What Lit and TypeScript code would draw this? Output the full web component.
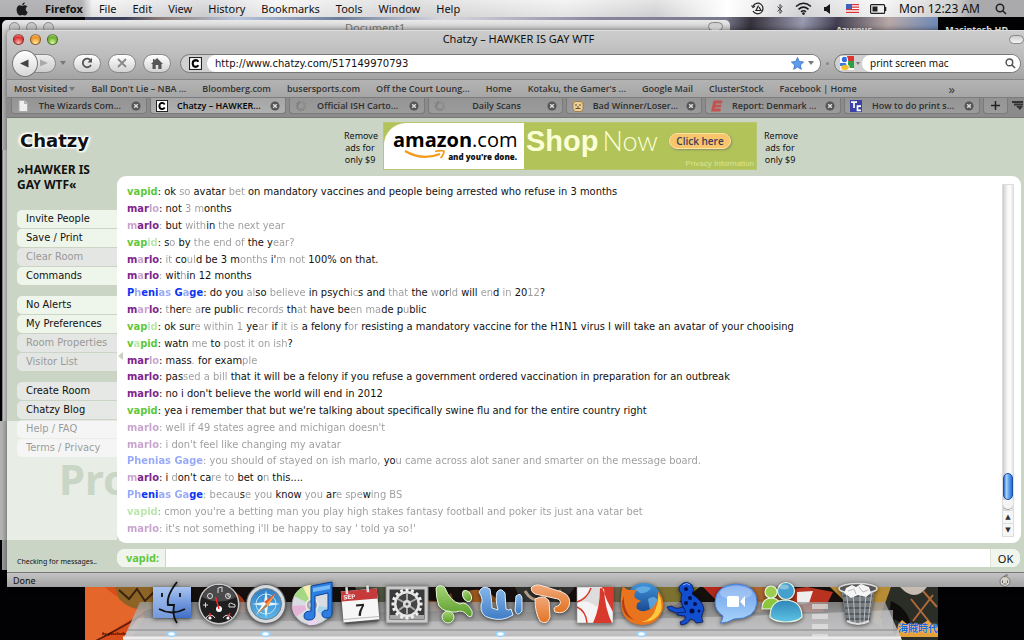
import { LitElement, html, css, svg } from "lit";
import { customElement } from "lit/decorators.js";
import { classMap } from "lit/directives/class-map.js";

type Message = { who: string; kind: "vapid" | "marlo" | "gage"; text: string };

// Stretches between tildes are drawn faded.
const messages: Message[] = [
  { who: "vapid", kind: "vapid", text: "ok ~so~ avatar ~bet~ on mandatory vaccines and people being arrested who refuse in 3 months" },
  { who: "mar~lo~", kind: "marlo", text: "not ~3~ ~m~onths" },
  { who: "~m~arlo~:~", kind: "marlo", text: "but ~with~in ~the next year~" },
  { who: "vap~id~", kind: "vapid", text: "s~o~ by ~the end of~ the y~ear?~" },
  { who: "m~a~rlo", kind: "marlo", text: "~it~ co~ul~d be 3 m~onths~ i'~m not~ 100% on that." },
  { who: "m~a~rlo~:~", kind: "marlo", text: "wit~h~in 12 months" },
  { who: "P~h~eni~as~ G~a~ge", kind: "gage", text: "do you ~al~so ~believe~ in psych~ic~s and ~that~ the ~w~or~ld~ will ~en~d ~in~ 20~12~?" },
  { who: "m~ar~lo", kind: "marlo", text: "~t~her~e a~re publi~c~ r~ecords~ th~at~ have be~en ma~de p~u~blic" },
  { who: "vap~id~", kind: "vapid", text: "ok sur~e within 1~ ye~ar~ if ~it is~ a felony f~or~ resisting a mandatory vaccine for the H1N1 virus I will take an avatar of your chooising" },
  { who: "v~a~pid", kind: "vapid", text: "watn ~me~ to ~post it on ish~?" },
  { who: "mar~lo~", kind: "marlo", text: "mass~.~ for exam~ple~" },
  { who: "marlo", kind: "marlo", text: "pas~sed a bill~ that it will be a felony if you refuse a government ordered vaccination in preparation for an outbreak" },
  { who: "marlo", kind: "marlo", text: "no i don't believe the world will end in 2012" },
  { who: "vapid", kind: "vapid", text: "yea i remember that but we're talking about specifically swine flu and for the entire country right" },
  { who: "~marlo:~", kind: "marlo", text: "~well if 49 states agree and michigan doesn't~" },
  { who: "~marlo:~", kind: "marlo", text: "~i don't feel like changing my avatar~" },
  { who: "~Phenias Gage:~", kind: "gage", text: "~you should of stayed on ish marlo,~ yo~u came across alot saner and smarter on the message board.~" },
  { who: "~m~arlo", kind: "marlo", text: "i ~d~on't ca~re to~ bet o~n~ this...." },
  { who: "~Ph~eni~as Ga~ge~:~", kind: "gage", text: "~becau~s~e you~ know ~you~ ar~e spe~w~ing BS~" },
  { who: "~vapid:~", kind: "vapid", text: "~cmon you're a betting man you play high stakes fantasy football and poker its just ana vatar bet~" },
  { who: "~marlo:~", kind: "marlo", text: "~it's not something i'll be happy to say ' told ya so!'~" },
];

const fade = (text: string) =>
  text.split("~").map((part, i) => (i % 2 ? html`<span class="faint">${part}</span>` : part));

const groups = [
  [["Invite People", "on"], ["Save / Print", "on"], ["Clear Room", "off"], ["Commands", "on"]],
  [["No Alerts", "on"], ["My Preferences", "on"], ["Room Properties", "off"], ["Visitor List", "off"]],
  [["Create Room", "alt"], ["Chatzy Blog", "alt"], ["Help / FAQ", "alt"], ["Terms / Privacy", "alt"]],
];

const spinner = svg`${[0, 30, 60, 90, 120, 150, 180, 210, 240, 270, 300, 330].map(
  (a) => svg`<path d="M6 .8V3.2" stroke="#555" stroke-opacity=${0.2 + a / 600} transform="rotate(${a} 6 6)"/>`)}`;
const letterC = svg`<rect x=".5" y=".5" width="11" height="11" fill="#fff" stroke="#222"/><path d="M8.700 4.400Q7.800 2.900 6.200 2.900Q3.400 3.100 3.400 6Q3.400 8.900 6.200 9.100Q7.800 9.100 8.700 7.600" fill="none" stroke="#000" stroke-width="1.900"/>`;
const tabIcons: Record<string, unknown> = {
  page: svg`<path d="M2 .5H7.500L10.500 3.500V11.500H2Z" fill="#eee" stroke="#aaa"/><path d="M7.500.5V3.500H10.500" fill="#ccc" stroke="#aaa"/>`,
  c: letterC,
  spin: spinner,
  bear: svg`<circle cx="2.500" cy="2.500" r="2" fill="#c99a5c"/><circle cx="9.500" cy="2.500" r="2" fill="#c99a5c"/><rect x="1" y="1.500" width="10" height="10" rx="3" fill="#ecd09a" stroke="#93713f" stroke-width=".8"/><path d="M3 5H5M7 5H9M3.500 8.500H8.500M5 7H7" stroke="#6b4a2a"/>`,
  e: svg`<path d="M2.500.5H11.500L10.800 3.500H5L4.700 4.700H10.500L10 7.200H4.200L3.800 8.600H10L9.300 11.500H0Z" fill="#c4534f"/>`,
  tc: svg`<rect width="12" height="12" fill="#3a44a6"/><path d="M1 2.200H7M4 2.200V8M11 6.200H7.500V10.300H11" fill="none" stroke="#fff" stroke-width="1.700"/>`,
};
const tabs = [
  ["page", "The Wizards Com..."], ["c", "Chatzy – HAWKER..."], ["spin", "Official ISH Carto..."], ["spin", "Daily Scans"],
  ["bear", "Bad Winner/Loser..."], ["e", "Report: Denmark ..."], ["tc", "How to do print s..."],
];
const bookmarks = ["Ball Don't Lie – NBA ...", "Bloomberg.com", "busersports.com", "Off the Court Loung...", "Home",
  "Kotaku, the Gamer's ...", "Google Mail", "ClusterStock", "Facebook | Home"];

const gearTeeth = Array.from({ length: 16 }, (_, i) =>
  svg`<rect x="20.500" y="6.500" width="3" height="5" fill="#f1f1f1" transform="rotate(${i * 22.5} 22 22)"/>`);

const dockIcons: { name: string; running?: boolean; art: unknown }[] = [
  { name: "Finder", running: true, art: svg`<rect x="3" y="5" width="38" height="31" fill="url(#finder)"/><path d="M3 5H24Q17 15 18 23H23V36H3Z" fill="#a9c4ef" opacity=".5"/><path d="M27 0Q16 14 18 23H24Q22 34 27 41" fill="none" stroke="#111" stroke-width="1.800"/><path d="M12 11V15M30 11V15" stroke="#111" stroke-width="1.800"/><path d="M9 27Q22 34 35 27" fill="none" stroke="#111" stroke-width="1.800"/>` },
  { name: "Dashboard", art: svg`<circle cx="22" cy="22" r="20.500" fill="#c9c9c9"/><circle cx="22" cy="22" r="19" fill="#1f1f20"/><path d="M5 15A18 18 0 0 1 39 15Q22 24 5 15" fill="#4a4a4c"/><g fill="none" stroke="#ddd" stroke-width="1"><circle cx="13" cy="14" r="2.500"/><circle cx="31" cy="14" r="2.500"/><path d="M31 12V14L33 15M6 23H11M8.500 20.500V25.500M21 11V6L25 5V10M32 25H38Q39 22 36 22Q33 20 32 22Z"/><path d="M9 36A5 5 0 0 1 18 36M26 36A5 5 0 0 1 35 36"/></g><circle cx="22" cy="27" r="3" fill="#fff"/><path d="M22 27L18.500 15M13 36V31M31 36L33 31" stroke="#f22" stroke-width="1.400"/><circle cx="13" cy="36" r="1.600" fill="#fff"/><circle cx="31" cy="36" r="1.600" fill="#fff"/>` },
  { name: "Safari", running: true, art: svg`<circle cx="22" cy="22" r="20" fill="#666"/><circle cx="22" cy="22" r="19" fill="#d6dadd"/><circle cx="22" cy="22" r="15.500" fill="url(#safari)" stroke="#73818b"/><circle cx="22" cy="22" r="10" fill="none" stroke="#b8e2f8" stroke-width="1"/><path d="M22 8L24 20L36 22L24 24L22 36L20 24L8 22L20 20Z" fill="#e3f4ff"/><path d="M32 11L24 24L20 20Z" fill="#e6542c"/><path d="M32 11L24 24L22 22Z" fill="#f4a24b"/><path d="M12 33L20 20L24 24Z" fill="#fff"/><path d="M12 33L24 24L22 22Z" fill="#b08350"/>` },
  { name: "iTunes", art: svg`<circle cx="21" cy="23" r="20" fill="#d9dde2" stroke="#999" stroke-width=".7"/><path d="M21 23L3 14A20 20 0 0 1 12 5Z" fill="#a5d884"/><path d="M21 23L1 24A20 20 0 0 0 5 35Z" fill="#e5b5d7"/><path d="M21 23L12 5A20 20 0 0 1 22 3Z" fill="#f6efb0"/><path d="M21 23L41 26A20 20 0 0 1 35 38Z" fill="#a7d5ee"/><path d="M21 23L26 42A20 20 0 0 1 17 43Z" fill="#ecd4f2"/><circle cx="21" cy="23" r="6" fill="#aaa" stroke="#eee" stroke-width="1.500"/><circle cx="21" cy="23" r="2.500" fill="#fff"/><path d="M20 4L41 0V31Q41 36 36 36Q31 36 31 32Q31 28 37 28V11L24 14V33Q24 38 18 38Q13 38 13 34Q13 29 20 29Z" fill="#2c7fe0" stroke="#0b439d"/><path d="M22 6L39 3V7L22 10Z" fill="#79b9fa"/>` },
  { name: "iCal", art: svg`<g transform="rotate(-5 22 22)"><path d="M4 9H40V38L38 41H6L4 38Z" fill="#555"/><rect x="4" y="8" width="36" height="31" fill="#f6f6f6"/><rect x="4" y="8" width="36" height="10" fill="#c73a3c"/><path d="M10 4V11M31 4V11" stroke="#ddd" stroke-width="2.500"/><path d="M4 36H40" stroke="#bbb"/><text x="6" y="16" font-family="Liberation Sans" font-size="6" font-weight="700" fill="#fff">SEP</text><text x="22" y="34" text-anchor="middle" font-family="Liberation Sans" font-size="17" font-weight="700" fill="#222">7</text></g>` },
  { name: "System Preferences", art: svg`<rect x="1" y="4" width="42" height="37" fill="#c9c9c9" stroke="#8b8b8b"/><rect x="4.500" y="7.500" width="35" height="30" fill="#3a3a3a"/><g>${gearTeeth}<circle cx="22" cy="22" r="13" fill="#e6e6e6"/><circle cx="22" cy="22" r="10.500" fill="#444"/><path d="M22 22L13 17M22 22L31 17M22 22V32M22 22L14 28M22 22L30 28M22 22V12" stroke="#aaa" stroke-width="2"/><circle cx="22" cy="22" r="4" fill="#ddd"/><circle cx="22" cy="22" r="1.500" fill="#555"/></g><path d="M5 33H39V37H5Z" fill="#eee" opacity=".6"/>` },
  { name: "Excel", art: svg`<g stroke="#e6f5d8" fill="url(#green)" transform="translate(3 0)"><path d="M1 6Q5 1 10 6Q15 19 25 22Q31 18 37 29Q38 37 33 34Q28 27 21 30Q10 31 4 24Q1 16 1 6Z"/><circle cx="13" cy="35" r="6"/><ellipse cx="32" cy="14" rx="4" ry="6" transform="rotate(-30 32 14)"/></g>` },
  { name: "Word", running: true, art: svg`<g stroke="#def" fill="url(#blue)" transform="translate(1 0)"><path d="M-1 10Q3 2 10 7Q12 20 12 26L18 28Q15 17 17 10Q21 5 25 11L26 27Q29 29 31 27L33 33Q22 40 10 36Q0 34 1 23Q4 18 -1 10Z"/><path d="M36 14Q41 10 42 16L42 29Q37 36 35 28Z"/></g>` },
  { name: "PowerPoint", art: svg`<g stroke="#ffe9d8" fill="url(#orange)" transform="translate(3 0)"><path d="M2 6Q6 1 14 4L33 10Q43 14 40 24Q36 33 26 30Q23 25 29 24Q34 20 29 17L6 12Q2 10 2 6Z"/><path d="M6 17Q16 12 20 19L21 35Q18 44 11 39Q6 31 6 17Z"/></g>` },
  { name: "Acrobat", art: svg`<rect x="4" y="5" width="36" height="36" fill="#f4f4f4" stroke="#999" stroke-width=".6"/><path d="M8 20Q16 14 18 5H29Q27 20 24 25Q15 18 8 20Z" fill="#ddd"/><path d="M29 5H40V30Q33 18 29 5ZM27 6Q27 26 20 41H39Q32 27 31 7Z" fill="#d9382c"/><path d="M4 20Q14 17 18 6M4 25Q13 29 14 41" fill="none" stroke="#d9382c" stroke-width="1.500"/>` },
  { name: "Firefox", running: true, art: svg`<circle cx="24" cy="19" r="18" fill="url(#globe)"/><path d="M15 7Q22 2 31 6Q27 12 20 11ZM28 17Q36 12 38 20Q36 28 30 28Z" fill="#71b9ec" opacity=".7"/><path d="M3 4Q6 8 10 8L17 8Q13 12 15 16L21 19Q15 21 17 27Q24 32 32 26Q39 20 38 9Q45 17 43 27Q38 43 22 43Q2 42 1 22Q0 12 3 4Z" fill="#e8751d"/><path d="M38 11Q43 20 41 29Q35 41 22 40Q33 37 36 26Q39 19 38 11Z" fill="#fbc93b"/><path d="M4 14Q3 30 14 38Q2 34 2 20Z" fill="#b63a12"/>` },
  { name: "Azureus", art: svg`<g fill="#124fd0" stroke="#06185c" stroke-width=".8"><path d="M12 5Q18-3 25 3Q28 8 25 12Q36 19 37 28Q33 34 36 40L29 41Q28 37 23 37Q22 42 14 43L13 40Q20 38 18 34L10 33L12 28L18 28Q12 20 15 12Q11 9 12 5Z"/><path d="M16 25Q8 28 5 24L0 25L2 28L9 31L19 30Z"/></g><g fill="#04104a"><circle cx="19" cy="7" r="2"/><circle cx="23" cy="16" r="2"/><circle cx="19" cy="21" r="2"/><circle cx="28" cy="22" r="2"/><circle cx="25" cy="29" r="2.500"/><circle cx="32" cy="29" r="1.500"/></g><path d="M16 3Q20 0 23 3" stroke="#7ab8ff" fill="none"/>` },
  { name: "iChat", art: svg`<path d="M22 2Q43 3 43 20Q42 37 20 37Q14 41 6 41Q9 38 9 34Q1 29 1 20Q2 3 22 2Z" fill="url(#bubble)" stroke="#4b7dd0"/><ellipse cx="22" cy="11" rx="16" ry="7" fill="#fff" opacity=".25"/><rect x="13" y="14" width="12" height="11" rx="1.500" fill="#fff"/><path d="M26 19.500L31 14V25Z" fill="#fff"/>` },
  { name: "Messenger", art: svg`<g stroke="#e9f4dd" stroke-width="1.200"><path d="M1 27Q1 16 11 16Q20 17 20 27Z" fill="#8cc63c"/><circle cx="10" cy="10" r="6" fill="#9bcf4f"/><path d="M9 35Q9 18 25 18Q41 19 41 35Q36 40 25 40Q14 40 9 35Z" fill="url(#teal)"/><circle cx="25" cy="9" r="8.500" fill="#45a0cd"/></g><ellipse cx="23" cy="5" rx="5" ry="2.500" fill="#fff" opacity=".35"/>` },
];

const desktopArt = svg`
  <rect width="853" height="60" fill="#15100e"/>
  <path d="M0 0H48L60 30L40 60H0Z" fill="#d94f1c"/><path d="M0 0H20Q40 20 70 18L0 60Z" fill="#e5662a"/>
  <path d="M6 56Q30 45 70 20" stroke="#5a1c0a" fill="none" stroke-width="1.500"/>
  <path d="M30 0H75L72 20Q50 28 34 12Z" fill="#8e6426"/><path d="M34 3L44 12L52 2L60 14L70 4" stroke="#3a240f" stroke-width="2" fill="none"/>
  <path d="M140 0Q165 10 160 25H130Z" fill="#a93a17"/>
  <path d="M270 0H330L320 25H280Z" fill="#4d5440"/><path d="M330 6Q350 22 366 6L372 24H326Z" fill="#79461f"/>
  <path d="M380 5Q405-4 420 24H392Z" fill="#9c5920"/><path d="M430 0H490L470 25H440Z" fill="#31312f"/>
  <path d="M440 4Q450 20 462 6M474 3L482 18" stroke="#b39f85" stroke-width="3" fill="none"/>
  <path d="M500 0H560V25H515Z" fill="#6b6147"/><path d="M565 0L615 0L580 25H550Z" fill="#7d7130"/>
  <path d="M618 0H640L652 18L630 12Z" fill="#b5291c"/><path d="M650 0H700V25H664Z" fill="#a9682f"/>
  <path d="M700 3L722 0L748 5L738 25H704Z" fill="#b9321f"/><path d="M712 5L728 4L724 16L712 18Z" fill="#eee"/>
  <path d="M745 0H806L796 40L770 24Z" fill="#b88b35"/><path d="M760 0L776 24M775 0L786 25" stroke="#5a3b13" stroke-width="2"/>
  <path d="M806 0L853 0V60H820L795 30Z" fill="#2b2d27"/><path d="M806 14Q824 22 826 40L804 30Z" fill="#0e0d0b"/>
  <path d="M815 0Q830 16 842 0Z" fill="#c5bdb2"/><path d="M826 12L850 42M848 8L828 34M838 4L852 20" stroke="#b06a38" stroke-width="2"/>
  <path d="M813 38L817 33L822 37L836 38L843 33L847 38L853 40V50H811Z" fill="#e6a13a"/>`;

@customElement("app-root")
export class AppRoot extends LitElement {
  static styles = css`
    :host { display: block; font-family: "Noto Sans", "DejaVu Sans", sans-serif; color: #111; }
    * { box-sizing: border-box; }
    button, input { font: inherit; color: inherit; border: 0; padding: 0; margin: 0; background: none; outline: 0; min-width: 0; }
    a { color: inherit; text-decoration: none; }
    svg { display: block; flex: none; }
    .desktop { position: relative; display: flex; flex-direction: column; height: 100vh; min-height: 480px; overflow: hidden; background: #020204; }

    .wall { position: absolute; top: 0; left: 85px; right: 86px; height: 34px; background: linear-gradient(100deg, #3b3f58 0 5%, #8a7a75 9%, #b9c6dd 18%, #6c7d9b 30%, #d8d8de 42%, #8b86a0 60%, #77788c 75%, #36323c 78%, #9a9ab0 84%, #413e50 88%, #b8a9a8 94%, #6c88b8 100%); }
    .drive, .app-label { position: absolute; top: 24px; font-size: 9px; line-height: 12px; font-weight: 700; color: #fff; }
    .drive { right: 16px; }
    .app-label { right: 152px; }

    .menubar { position: relative; display: flex; align-items: center; flex: none; gap: 16px; height: 17px; padding: 0 17px 0 15px; font-size: 11px; line-height: 16px; background: linear-gradient(90deg, #a9a9abcc 0 8%, #fff8 9% 11%, #d5d5d866 20%, #fffa 27%, #ddd8 40%, #fff8 55%, #ddd6 64%, #ffff 71%, #d8d8daaa 78%, #ffffffbb 86%, #ccca 93%, #aaaaac 95%), linear-gradient(#e8e8ea, #c3c3c6); }
    .menubar .app { font-weight: 700; }
    .status { display: flex; align-items: center; gap: 11px; margin-left: auto; font-size: 12px; }
    .status span { margin: 0 4px 0 1px; }

    .back-window { position: absolute; top: 20px; left: 2px; width: 728px; bottom: 70px; border-radius: 5px 5px 0 0; background: linear-gradient(#e8e8e8, #cfcfcf 12px, #b5b5b5 70px, #9c9c9c); }
    .back-window::before { content: ""; position: absolute; top: 130px; bottom: 30px; left: 0; width: 5px; background: #cfcfd0; border-left: 1px solid #888; }
    .back-title { display: flex; align-items: flex-start; padding: 2px 7px; gap: 6px; }
    .dot { width: 11px; height: 11px; border-radius: 50%; border: 1px solid #8b8b8b; background: #ccc; }
    .back-name { margin-left: 271px; padding-left: 14px; font-size: 11px; line-height: 12px; color: #777; }
    .pill { width: 15px; height: 9px; border-radius: 5px; border: 1px solid #888; background: linear-gradient(#ccc, #f5f5f5); }
    .back-title .pill { margin-left: auto; }

    .window { position: relative; display: flex; flex-direction: column; flex: 1; min-height: 0; margin: 13px 0 0 7px; border-radius: 5px 0 0 0; background: #cbd5c5; box-shadow: 0 0 6px #0008; overflow: hidden; }
    .chrome { flex: none; background: linear-gradient(#cdcdcd, #bcbcbc 25px, #a2a2a2 49px); border-top: 1px solid #ddd; }
    .titlebar { display: grid; grid-template-columns: 1fr auto 1fr; align-items: center; height: 18px; padding: 0 0 2px 6px; }
    .lights { display: flex; gap: 6px; }
    .light { width: 11px; height: 11px; border-radius: 50%; border: 1px solid #0006; }
    .red { background: radial-gradient(circle at 50% 85%, #ffb5b0, #d9322f 60%, #f99 100%); }
    .amber { background: radial-gradient(circle at 50% 85%, #ffe9a0, #e99025 60%, #fc9 100%); }
    .green { background: radial-gradient(circle at 50% 85%, #d9f7a0, #6cae2b 60%, #bd9 100%); }
    .title { font-size: 11px; line-height: 16px; }
    .titlebar .pill { justify-self: end; }
    .toolbar { display: flex; align-items: center; gap: 7px; height: 30px; padding: 0 3px 2px 5px; }
    .nav { display: flex; align-items: center; width: 54px; }
    .round { z-index: 1; display: grid; place-items: center; width: 27px; height: 27px; border-radius: 50%; border: 1px solid #777; background: linear-gradient(#fff, #d8d8d8); }
    .forward { display: grid; place-items: center; width: 24px; height: 19px; margin-left: -5px; border-radius: 0 10px 10px 0; border: 1px solid #888; background: linear-gradient(#eee, #ccc); }
    .caret { border: 3px solid transparent; border-top: 4px solid #777; border-bottom: 0; }
    .nav .caret { margin-left: 4px; }
    .tool { display: grid; place-items: center; width: 28px; height: 19px; border-radius: 10px; border: 1px solid #888; background: linear-gradient(#fff, #d2d2d2); }
    .field { display: flex; align-items: center; height: 19px; border-radius: 10px; border: 1px solid #777; background: #d0d0d0; overflow: hidden; }
    .field input { flex: 1; align-self: stretch; }
    .inner { display: flex; align-items: center; flex: 1; min-width: 0; align-self: stretch; gap: 4px; padding: 0 6px 0 8px; background: #fff; border-radius: 9px 0 0 9px; font-size: 10px; }
    .url { flex: 1; margin-left: 2px; }
    .url .inner { font-family: "DejaVu Sans", sans-serif; }
    .url > svg { margin: 0 5px 0 8px; }
    .search { width: 187px; }
    .search .inner { padding-right: 4px; }
    .search > svg { margin: 0 2px 0 5px; }
    .search .caret { margin-right: 2px; border-width: 3px 2px 0; }
    .grip { width: 3px; height: 3px; margin: 0 -2px; border-radius: 50%; background: #888; }

    .bookmarks { display: flex; align-items: center; gap: 16px; height: 18px; padding: 0 69px 0 7px; border-top: 1px solid #858585; font-family: "Open Sans", sans-serif; font-size: 9px; font-weight: 600; color: #333; white-space: nowrap; background: linear-gradient(#b3b3b3, #a6a6a6); }
    .bookmarks .most { display: flex; align-items: center; gap: 2px; }
    .more { margin-left: auto; font-size: 13px; font-weight: 400; }
    .tabs { display: flex; gap: 3px; height: 21px; padding: 0 0 3px 4px; border-top: 1px solid #7c7c7c; border-bottom: 1px solid #777; background: #8b8b8b; font-family: "Open Sans", sans-serif; font-size: 9px; font-weight: 600; color: #2e2e2e; }
    .tab { display: flex; flex: 1; align-items: center; border-radius: 0 0 4px 4px; border: 1px solid #7b7b7b; border-top: 0; padding: 0 5px; background: linear-gradient(#949494, #9c9c9c); }
    .tab.active { background: linear-gradient(#a5a5a5, #b0b0b0); color: #000; }
    .tab span { flex: 1; text-align: center; white-space: nowrap; overflow: hidden; }
    .plus { flex: none; width: 25px; justify-content: center; }
    .all { flex: none; width: 13px; }

    .page { display: grid; grid-template: 58px minmax(0, 1fr) 29px / 110px minmax(0, 1fr); flex: 1; min-height: 0; padding-right: 3px; }
    .side { position: relative; grid-row: 1 / 4; display: flex; flex-direction: column; padding: 11px 0 3px 10px; font-family: "DejaVu Sans Condensed", "Noto Sans", sans-serif; font-size: 11px; }
    .logo { margin: 0 0 0 3px; font-family: "DejaVu Sans", sans-serif; font-size: 18px; line-height: 24px; font-weight: 700; text-shadow: 0 0 3px #fff, 0 0 3px #fff, 1px 1px 2px #fff, -1px -1px 2px #fff, 2px 0 3px #fff, -2px 0 3px #fff; }
    .room { margin: 9px 0 18px; font: 700 12px/15px "Noto Sans", sans-serif; }
    .menu { display: flex; flex-direction: column; gap: 1px; margin-bottom: 11px; }
    .menu a { height: 18px; line-height: 18px; padding-left: 9px; border-radius: 5px 0 0 5px; background: #eef5ea; white-space: nowrap; }
    .menu a.alt { background: #e6e8e5; }
    .menu a.off { background: #e4e6e4; color: #999; }
    .sheet { position: absolute; left: 0; right: 0; top: 303px; bottom: 32px; overflow: hidden; background: #ffffff90; }
    .sheet-edge { position: absolute; left: 0; width: 7px; top: 421px; bottom: 100px; background: #b5b5b5; }
    .sheet span { position: absolute; left: 52px; top: 31px; font: 700 42px/54px "Noto Sans", sans-serif; color: #c9d6c5; }
    .checking { margin-top: auto; font: 7px/14px "Noto Sans", sans-serif; white-space: nowrap; }

    .ad { display: flex; align-items: center; gap: 7px; padding: 0 0 2px 227px; text-align: center; font-size: 9px; line-height: 12px; }
    .ad p { margin: 0; padding-top: 3px; width: 32px; }
    .banner { display: flex; width: 374px; height: 48px; border: 1px solid #b9c870; background: #b2c35a; flex: none; }
    .amazon { display: flex; flex-direction: column; width: 140px; padding: 5px 7px 0 9px; background: #fff; border-radius: 22px 0 0 0; text-align: left; font-family: "Open Sans", sans-serif; position: relative; }
    .amazon b { font-size: 20px; line-height: 24px; color: #000; }
    .amazon b i { font-style: normal; font-weight: 400; }
    .amazon small { font-size: 8px; line-height: 10px; font-weight: 800; text-align: right; }
    .amazon svg { position: absolute; left: 20px; top: 26px; }
    .shop { flex: 1; display: grid; grid-template-columns: auto auto 1fr; grid-template-rows: 36px 10px; align-items: center; padding: 0 2px; font-family: "Liberation Sans", sans-serif; color: #fbffd6; }
    .shop b { font-size: 29px; line-height: 36px; }
    .shop i { font: 300 27px/36px Lato, sans-serif; padding: 0 11px 0 4px; }
    .shop button { width: 62px; height: 16px; border-radius: 8px; font: 600 10px/14px "Open Sans", sans-serif; background: #f8c46c; color: #3a3a5c; border: 1px solid #fbe3a4; box-shadow: 1px 1px 2px #6668; }
    .shop small { grid-column: 1 / 4; justify-self: end; font-size: 8px; line-height: 10px; color: #d9e396; }

    .panel { position: relative; display: flex; border-radius: 9px; background: #fff; padding: 8px 7px 6px 10px; min-height: 0; }
    .log { display: flex; flex-direction: column; flex: 1; min-width: 0; margin: 0; padding: 0; list-style: none; font-family: "DejaVu Sans Condensed", "Noto Sans", sans-serif; font-size: 11px; line-height: 16px; white-space: nowrap; overflow: hidden; }
    .log li { display: flex; align-items: center; flex: 1; min-height: 0; white-space: pre; }
    .name { font-weight: 700; }
    .vapid { color: #5fc83c; }
    .marlo { color: #7d268d; }
    .gage { color: #0a36f4; }
    .faint { opacity: .42; }
    .arrow { position: absolute; left: 1px; top: 49%; transform: translateY(-50%); border: 4px solid transparent; border-left: 0; border-right: 5px solid #c6d1c0; }
    .scroll { display: flex; flex-direction: column; align-items: center; width: 12px; border: 1px solid #ddd; background: linear-gradient(90deg, #ccc, #f3f3f3 40%, #fff 70%, #e3e3e3); }
    .thumb { width: 10px; height: 27px; margin-top: auto; border: 1px solid #1d4ea8; border-radius: 5px; background: linear-gradient(90deg, #2a68cc, #a9d3fb 30%, #5fa3ee 60%, #2b6cd2); }
    .track-end { width: 10px; height: 10px; border-radius: 0 0 6px 6px; border-bottom: 1px solid #999; background: #f4f4f4; }
    .step { display: grid; place-items: center; width: 10px; height: 13px; font-size: 7px; line-height: 12px; border-top: 1px solid #ddd; background: #f6f6f6; color: #333; }
    .entry { display: flex; align-items: stretch; height: 18px; margin: 6px 1px 0 0; border-radius: 8px; overflow: hidden; background: #fff; font-size: 11px; }
    .entry label { width: 49px; padding-left: 9px; line-height: 17px; font-weight: 700; color: #5fc83c; background: #eff5ec; border-right: 1px solid #ccd6c7; }
    .entry input { flex: 1; padding: 0 6px; }
    .entry button { width: 30px; background: #f0f5ed; border-left: 1px solid #dde5d8; }

    .statusbar { display: flex; align-items: center; justify-content: space-between; flex: none; height: 15px; padding: 0 13px 0 6px; border-top: 1px solid #777; font-size: 9px; background: linear-gradient(#c4c4c4, #a2a2a2); }

    .dock { position: relative; z-index: 2; flex: none; display: flex; justify-content: center; height: 53px; }
    .art { position: absolute; top: 0; left: 85px; right: 86px; height: 53px; overflow: hidden; }
    .art svg { width: 100%; height: 100%; }
    .art .sign { position: absolute; right: 0; bottom: 6px; font: 700 10px/12px "Noto Sans CJK JP", sans-serif; color: #1668d8; text-shadow: 0 0 1px #fff; }
    .art .by { position: absolute; left: 17px; bottom: 2px; font: italic 700 5px/8px "Liberation Serif", serif; color: #200; }
    .shelf { position: absolute; inset: 15px 0 0; }
    .shelf svg { width: 100%; height: 100%; }
    .icons { position: relative; display: flex; margin: -5px 0 0 5px; }
    .defs { position: absolute; }
    .app-icon { display: flex; justify-content: center; align-items: flex-start; position: relative; width: 47px; height: 58px; }
    .app-icon svg { overflow: visible; filter: drop-shadow(0 1px 2px #0009); }
    .running::after { content: ""; position: absolute; left: 18px; bottom: 3px; width: 11px; height: 6px; border-radius: 50%; background: radial-gradient(#fff 25%, #8fd1ff 55%, transparent); }
    .divider { width: 28px; padding: 22px 6px 0; }
    .divider::before { content: ""; display: block; height: 33px; background: repeating-linear-gradient(#eee9 0 5px, transparent 5px 10px); }
  `;

  render() {
    return html`
      <div class="desktop">
        <div class="wall"></div>
        <span class="app-label">Azureus</span><span class="drive">Macintosh HD</span>
        <header class="menubar">
          <svg width="14" height="14" viewBox="0 0 14 14"><path d="M7.200 4Q8.500 3 10 3.200Q11.700 3.400 12.300 4.500Q10.500 5.700 10.700 7.600Q10.900 9.500 12.700 10.200Q11.600 13.300 9.900 13.500Q8.800 13.500 7.300 13.100Q5.900 13.600 4.800 13.500Q2 12.500 1.600 8.300Q1.600 4 4.500 3.300Q5.700 3.200 7.200 4ZM7.100 3.200Q7.100.9 9.700.2Q9.800 2.700 7.100 3.200Z" fill="#1c1c1c"/></svg>
          <button class="app">Firefox</button>
          ${["File", "Edit", "View", "History", "Bookmarks", "Tools", "Window", "Help"].map((m) => html`<button>${m}</button>`)}
          <div class="status">
            <svg width="14" height="13" viewBox="0 0 14 13" fill="none" stroke="#222" stroke-width="1.200"><path d="M2 9A5.300 5.300 0 1 0 2 4M.5 3.500L2 5.500L4 4M7.500 3.500L5 8.500H10L8 5"/></svg>
            <svg width="8" height="12" viewBox="0 0 8 12" fill="none" stroke="#444"><path d="M1.500 3.500L6 8.200L4 10.500V1.500L6 3.700L1.500 8.500"/></svg>
            <svg width="17" height="13" viewBox="0 0 17 13" fill="none" stroke="#1a1a1a" stroke-width="1.600"><path d="M1 4.500Q8.500-2 16 4.500M3.500 7.300Q8.500 3 13.500 7.300M6 9.800Q8.500 7.800 11 9.800"/><circle cx="8.500" cy="11.600" r=".6"/></svg>
            <svg width="12" height="10" viewBox="0 0 12 10"><path d="M1 3H3L7 0V10L3 7H1Z" fill="#1a1a1a"/></svg>
            <svg width="13" height="9" viewBox="0 0 13 9"><rect width="13" height="9" fill="#fff"/><path d="M0 .7H13M0 3.200H13M0 5.700H13M0 8.300H13" stroke="#d8343a" stroke-width="1.300"/><rect width="6" height="5" fill="#3c62b8"/></svg>
            <svg width="17" height="10" viewBox="0 0 17 10"><rect x=".6" y=".6" width="14" height="8.800" rx="1" fill="#eee" stroke="#222" stroke-width="1.200"/><path d="M15.500 3V7" stroke="#222" stroke-width="1.600"/><rect x="2.500" y="2.500" width="5" height="5" fill="#222"/></svg>
            <span>Mon 12:23 AM</span>
            <svg width="12" height="12" viewBox="0 0 12 12" fill="none" stroke="#222" stroke-width="1.500"><circle cx="5" cy="5" r="3.700"/><path d="M7.700 7.700L11 11"/></svg>
          </div>
        </header>

        <div class="back-window">
          <div class="back-title"><i class="dot"></i><i class="dot"></i><i class="dot"></i><span class="back-name">Document1</span><i class="pill"></i></div>
        </div>
        <div class="sheet-edge"></div>

        <main class="window">
          <div class="chrome">
            <div class="titlebar">
              <div class="lights"><i class="light red"></i><i class="light amber"></i><i class="light green"></i></div>
              <span class="title">Chatzy – HAWKER IS GAY WTF</span>
              <i class="pill"></i>
            </div>
            <div class="toolbar">
              <div class="nav">
                <button class="round" aria-label="Back"><svg width="9" height="9" viewBox="0 0 9 9"><path d="M0 4.500L8.500.5V8.500Z" fill="#444"/></svg></button>
                <button class="forward" aria-label="Forward"><svg width="8" height="8" viewBox="0 0 8 8"><path d="M8 4L0 .5V7.500Z" fill="#aaa"/></svg></button>
                <i class="caret"></i>
              </div>
              <button class="tool" aria-label="Reload"><svg width="12" height="12" viewBox="0 0 12 12"><path d="M9.800 3.700A4.300 4.300 0 1 0 10 7.800" fill="none" stroke="#555" stroke-width="1.800"/><path d="M11 .8V5.500H6.500Z" fill="#555"/></svg></button>
              <button class="tool" aria-label="Stop"><svg width="10" height="10" viewBox="0 0 10 10"><path d="M1 1L9 9M9 1L1 9" stroke="#888" stroke-width="1.800"/></svg></button>
              <button class="tool" aria-label="Home"><svg width="12" height="11" viewBox="0 0 12 11"><path d="M6 0L12 6H10.500V11H7.300V7H4.700V11H1.500V6H0L2 4V1H3.500V2.500Z" fill="#555"/></svg></button>
              <div class="field url">
                <svg width="13" height="13" viewBox="0 0 12 12">${letterC}</svg>
                <div class="inner"><input aria-label="Address" .value=${"http://www.chatzy.com/517149970793"} />
                  <svg width="13" height="13" viewBox="0 0 13 13"><path d="M6.500.5L8.300 4.500L12.600 5L9.400 8L10.300 12.300L6.500 10.100L2.700 12.300L3.600 8L.4 5L4.700 4.500Z" fill="#5e9bea" stroke="#3a6fc0" stroke-width=".8"/></svg>
                  <i class="caret"></i>
                </div>
              </div>
              <i class="grip"></i>
              <div class="field search">
                <svg width="14" height="14" viewBox="0 0 14 14"><rect width="14" height="14" rx="1" fill="#fff"/><path d="M7 0H14V5H8Z" fill="#d33"/><path d="M8 5H14V12H8Z" fill="#2f9e44"/><circle cx="4.500" cy="3.500" r="2.700" fill="#2f6fe0"/><path d="M0 7H7V10H0Z" fill="#3b7be2"/><ellipse cx="5" cy="11.500" rx="4" ry="2.500" fill="#f5c22b"/><path d="M7 2Q9 6 6 8Q10 9 9 13" stroke="#fff" fill="none"/></svg>
                <i class="caret"></i>
                <div class="inner"><input aria-label="Search" .value=${"print screen mac"} />
                  <svg width="11" height="11" viewBox="0 0 12 12" fill="none" stroke="#555" stroke-width="1.600"><circle cx="4.800" cy="4.800" r="3.600"/><path d="M7.500 7.500L11 11"/></svg></div>
              </div>
            </div>
            <nav class="bookmarks">
              <a class="most" href="#">Most Visited <i class="caret"></i></a>
              ${bookmarks.map((b) => html`<a href="#">${b}</a>`)}
              <span class="more">»</span>
            </nav>
            <div class="tabs" role="tablist">
              ${tabs.map(([icon, label], i) => html`
                <button role="tab" class=${classMap({ tab: true, active: i === 1 })}>
                  <svg width="12" height="12" viewBox="0 0 12 12">${tabIcons[icon]}</svg><span>${label}</span>
                  <svg width="10" height="10" viewBox="0 0 11 11"><circle cx="5.500" cy="5.500" r="5" fill="#555"/><path d="M3.500 3.500L7.500 7.500M7.500 3.500L3.500 7.500" stroke="#ddd" stroke-width="1.600"/></svg>
                </button>`)}
              <button class="tab plus" aria-label="New tab"><svg width="9" height="9" viewBox="0 0 9 9"><path d="M4.500 0V9M0 4.500H9" stroke="#222" stroke-width="1.500"/></svg></button>
              <button class="all" aria-label="All tabs"><svg width="12" height="10" viewBox="0 0 12 10"><path d="M1 1H12M3 3.500H12" stroke="#333" stroke-width="2"/><path d="M5 5H12L9 9Z" fill="#333"/></svg></button>
            </div>
          </div>

          <div class="page">
            <aside class="side">
              <h1 class="logo">Chatzy</h1>
              <h2 class="room">»HAWKER IS<br />GAY WTF«</h2>
              ${groups.map((g) => html`<nav class="menu">${g.map(([label, state]) => html`<a href="#" class=${state}>${label}</a>`)}</nav>`)}
              <div class="sheet"><span>Pro</span></div>
              <span class="checking">Checking for messages..</span>
            </aside>
            <div class="ad">
              <p>Remove ads for only $9</p>
              <div class="banner">
                <div class="amazon"><b>amazon<i>.com</i></b><small>and you're done.</small>
                  <svg width="44" height="12" viewBox="0 0 44 12"><path d="M1 2Q18 12 36 5" fill="none" stroke="#f59b1c" stroke-width="2.400"/><path d="M31 2.500Q37 1 40 2Q40 6 36.500 9" fill="none" stroke="#f59b1c" stroke-width="1.600"/></svg></div>
                <div class="shop"><b>Shop</b><i>Now</i><button>Click here</button><small>Privacy Information</small></div>
              </div>
              <p>Remove ads for only $9</p>
            </div>
            <section class="panel">
              <i class="arrow"></i>
              <ul class="log">
                ${messages.map((m) => html`<li><span class="name ${m.kind}">${fade(m.who.replace(":", ""))}</span><span>${m.who.includes(":") ? fade("~:~") : ":"} ${fade(m.text)}</span></li>`)}
              </ul>
              <div class="scroll"><i class="thumb"></i><i class="track-end"></i><button class="step" aria-label="Scroll up">▲</button><button class="step" aria-label="Scroll down">▼</button></div>
            </section>
            <form class="entry" @submit=${(e: Event) => e.preventDefault()}>
              <label for="say">vapid:</label><input id="say" /><button>OK</button>
            </form>
          </div>

          <footer class="statusbar"><span>Done</span>
            <svg width="12" height="13" viewBox="0 0 12 13"><circle cx="6" cy="7.500" r="5" fill="#d5d0c8" stroke="#777"/><path d="M5 3Q6 0 9 1M3.500 6.500V9M8.500 6.500V9M4.500 10H7.500" stroke="#666" fill="none"/></svg>
          </footer>
        </main>

        <footer class="dock">
          <div class="art"><svg viewBox="0 0 853 53" preserveAspectRatio="none">${desktopArt}</svg><span class="by">by pixelzebra</span><span class="sign">海賊時代</span></div>
          <div class="shelf"><svg viewBox="0 0 1024 38" preserveAspectRatio="none"><defs><linearGradient id="glass" x2="0" y2="1"><stop stop-color="#9a9a9b" stop-opacity=".78"/><stop offset="1" stop-color="#cfcfd1" stop-opacity=".96"/></linearGradient></defs><path d="M140 0H885L902 38H123Z" fill="url(#glass)"/><path d="M138 16Q500 26 893 8V32H126Z" fill="#c9c9cb" opacity=".6"/><path d="M127 28H897" stroke="#888"/><path d="M123 36H901" stroke="#eee" stroke-width="3"/></svg></div>
          <nav class="icons">
            <svg class="defs" width="0" height="0"><defs>
              <linearGradient id="finder" x2="0" y2="1"><stop stop-color="#a9c4f0"/><stop offset="1" stop-color="#3f6fc8"/></linearGradient>
              <linearGradient id="safari" x2="0" y2="1"><stop stop-color="#2f7cc4"/><stop offset="1" stop-color="#5db8ea"/></linearGradient>
              <linearGradient id="green" x2="0" y2="1"><stop stop-color="#a6d476"/><stop offset="1" stop-color="#5b9d2b"/></linearGradient>
              <linearGradient id="blue" x2="0" y2="1"><stop stop-color="#86b7ea"/><stop offset="1" stop-color="#3f7cc4"/></linearGradient>
              <linearGradient id="orange" x2="0" y2="1"><stop stop-color="#f0a87c"/><stop offset="1" stop-color="#e2731f"/></linearGradient>
              <linearGradient id="globe" x2="0" y2="1"><stop stop-color="#3f94d8"/><stop offset="1" stop-color="#11367f"/></linearGradient>
              <linearGradient id="bubble" x2="0" y2="1"><stop stop-color="#6c9eea"/><stop offset="1" stop-color="#a8d4fb"/></linearGradient>
              <linearGradient id="teal" x2="0" y2="1"><stop stop-color="#2f86b8"/><stop offset="1" stop-color="#5ec4e4"/></linearGradient>
            </defs></svg>
            ${dockIcons.map((d) => html`
              <button class=${classMap({ "app-icon": true, running: !!d.running })} aria-label=${d.name}>
                <svg width="44" height="44" viewBox="0 0 44 44">${d.art}</svg>
              </button>`)}
            <i class="divider"></i>
            <button class="app-icon" aria-label="Trash">
              <svg width="44" height="44" viewBox="0 0 44 44"><path d="M5 6L10 39Q22 45 34 39L39 6Z" fill="#777c80"/><path d="M7 14H37M8 20H36M9 26H35M9 32H35M10 37H34" stroke="#33373a" stroke-width="1.200"/><path d="M10 8L14 40M17 9L19 42M24 9V42M30 9L28 41M36 8L32 40" stroke="#bfc4c8" stroke-width=".9"/><ellipse cx="22" cy="6.500" rx="19" ry="5" fill="#555" stroke="#ddd" stroke-width="1.600"/><path d="M8 11L10 6L16 3L20 5L25 2L33 5L35 11L30 15L22 13L15 16Z" fill="#f5f5f5"/><path d="M12 9L18 7L20 12M23 5L27 10L32 8" stroke="#bbb" fill="none"/><path d="M11 39Q22 45 33 39" stroke="#ddd" stroke-width="2" fill="none"/></svg>
            </button>
          </nav>
        </footer>
      </div>`;
  }
}
